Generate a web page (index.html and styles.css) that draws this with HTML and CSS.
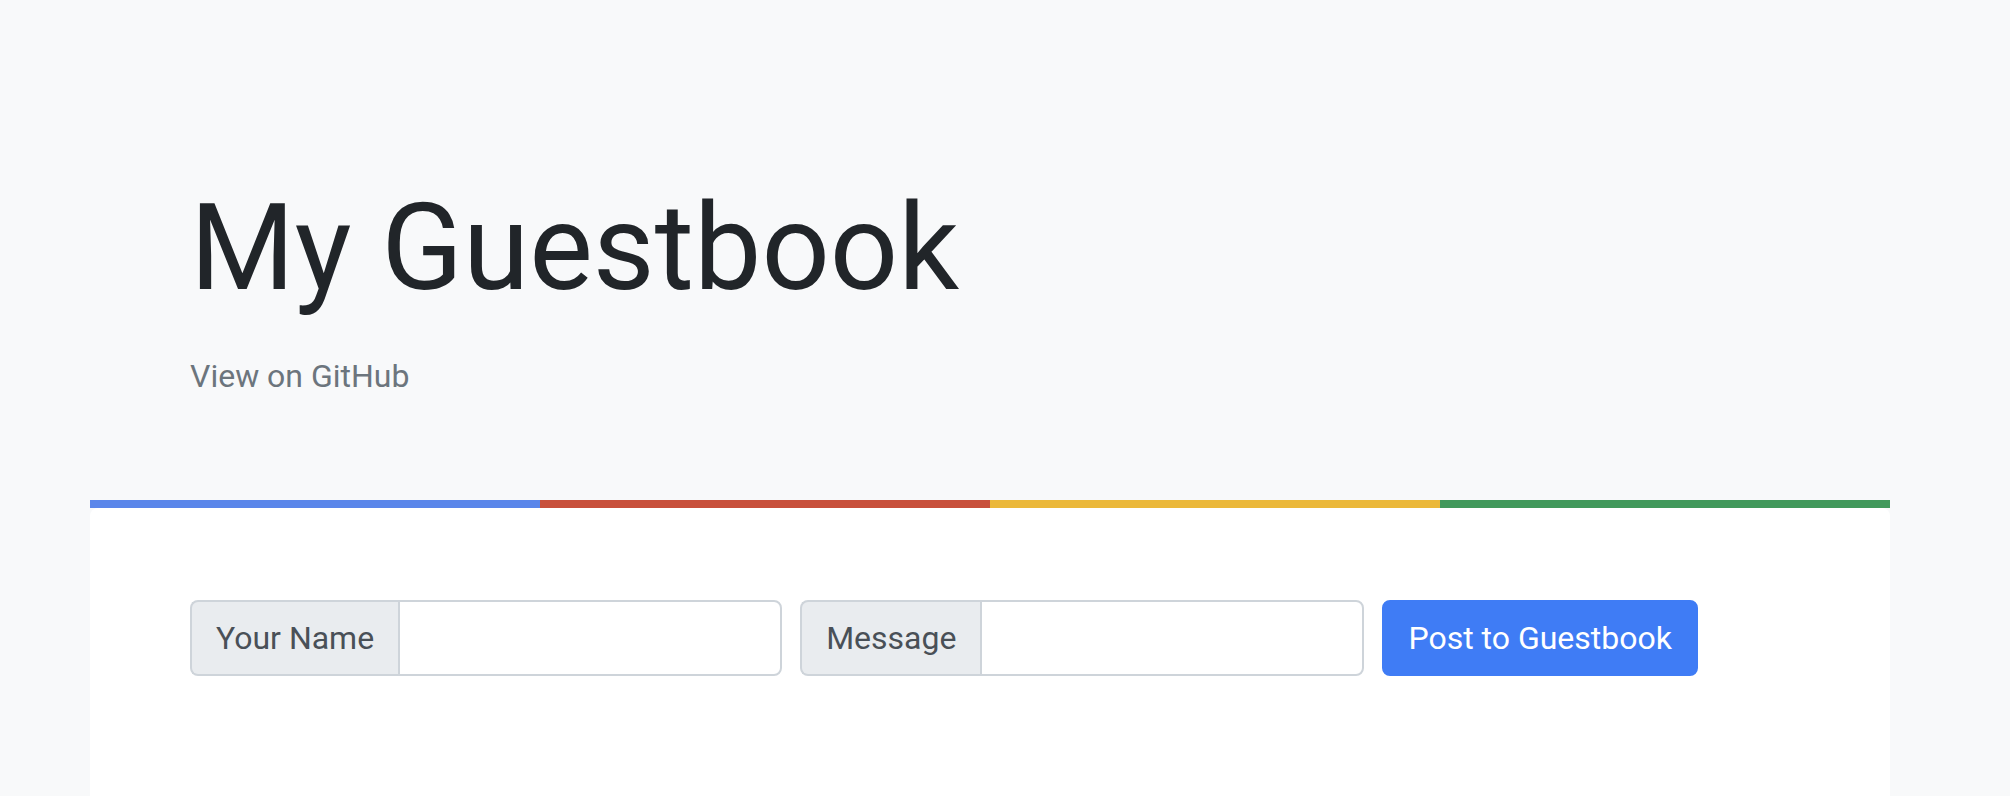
FILE: index.html
```html
<!DOCTYPE html>
<html>
<head>
<meta charset="utf-8">
<link rel="stylesheet" href="styles.css">
</head>
<body>
<div class="page">
  <header class="hero">
    <h1 class="title">My Guestbook</h1>
    <a class="github" href="#">View on GitHub</a>
  </header>
  <div class="bar">
    <span class="seg blue"></span>
    <span class="seg red"></span>
    <span class="seg yellow"></span>
    <span class="seg green"></span>
  </div>
  <main class="card">
    <form class="form">
      <div class="group">
        <span class="addon">Your Name</span>
        <input class="field" type="text">
      </div>
      <div class="group">
        <span class="addon">Message</span>
        <input class="field" type="text">
      </div>
      <button class="btn" type="button">Post to Guestbook</button>
    </form>
  </main>
</div>
</body>
</html>
```
FILE: styles.css
```css
html, body {
  margin: 0;
  padding: 0;
  background: #f8f9fa;
  font-family: Roboto, "Liberation Sans", sans-serif;
  height: 796px;
  overflow: hidden;
}
.page {
  margin-left: 90px;
  width: 1800px;
  display: flex;
  flex-direction: column;
}
.hero {
  padding: 176px 0 0 100px;
  display: flex;
  flex-direction: column;
  align-items: flex-start;
}
.title {
  margin: 0;
  font-size: 120px;
  font-weight: 400;
  line-height: 144px;
  color: #212529;
}
.github {
  margin-top: 32px;
  font-size: 32px;
  line-height: 48px;
  color: #6c757d;
  text-decoration: none;
}
.bar {
  margin-top: 100px;
  display: flex;
  height: 8px;
}
.seg { flex: 1; }
.blue { background: #5a86ea; }
.red { background: #c8503c; }
.yellow { background: #ebb83a; }
.green { background: #42995c; }
.card {
  background: #fff;
  border-radius: 8px 8px 0 0;
  height: 300px;
}
.form {
  display: flex;
  align-items: center;
  gap: 18px;
  padding: 92px 0 0 100px;
}
.group {
  display: flex;
  height: 76px;
  box-sizing: border-box;
}
.addon {
  display: flex;
  align-items: center;
  padding: 0 24px;
  background: #e9ecef;
  border: 2px solid #ced4da;
  border-right: 0;
  border-radius: 8px 0 0 8px;
  font-size: 32px;
  color: #495057;
  height: 76px;
  box-sizing: border-box;
}
.field {
  width: 384px;
  height: 76px;
  box-sizing: border-box;
  border: 2px solid #ced4da;
  border-radius: 0 8px 8px 0;
  background: #fff;
  margin: 0;
  padding: 12px 24px;
  font-size: 32px;
  font-family: inherit;
  outline: none;
}
.btn {
  height: 76px;
  box-sizing: border-box;
  padding: 0 24px;
  background: #3f7cf5;
  color: #fff;
  border: 2px solid #3f7cf5;
  border-radius: 8px;
  font-size: 32px;
  font-family: inherit;
  cursor: pointer;
}
```
